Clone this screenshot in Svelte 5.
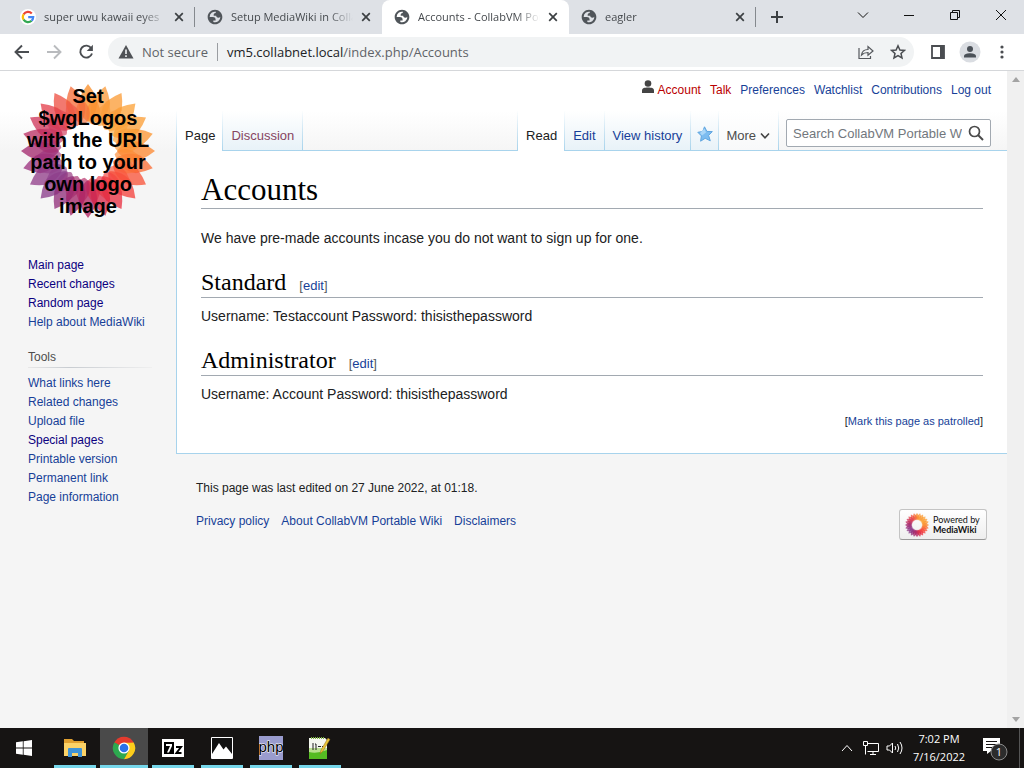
<script>
  const tabs = [
    { title: 'super uwu kawaii eyes', google: true },
    { title: 'Setup MediaWiki in CollabVM' },
    { title: 'Accounts - CollabVM Portable', active: true },
    { title: 'eagler' }
  ];
  const personal = [
    { label: 'Talk', missing: true },
    { label: 'Preferences' },
    { label: 'Watchlist' },
    { label: 'Contributions' },
    { label: 'Log out' }
  ];
  const mainLinks = [
    { label: 'Main page', visited: true },
    { label: 'Recent changes', visited: true },
    { label: 'Random page', visited: true },
    { label: 'Help about MediaWiki' }
  ];
  const toolLinks = [
    { label: 'What links here' },
    { label: 'Related changes' },
    { label: 'Upload file' },
    { label: 'Special pages', visited: true },
    { label: 'Printable version' },
    { label: 'Permanent link' },
    { label: 'Page information' }
  ];
  const sections = [
    { title: 'Standard', text: 'Username: Testaccount Password: thisisthepassword' },
    { title: 'Administrator', text: 'Username: Account Password: thisisthepassword' }
  ];
  // Petal colours, clockwise from the top
  const petals = [
    '#fa8f2c', '#fb9c3c', '#fb9d3a', '#fca43c', '#fb9f38', '#fb9735',
    '#fc8a34', '#fb7038', '#f9563c', '#f4443f', '#e93242', '#d92a4a',
    '#b42562', '#a4286a', '#94327c', '#8c3f8c', '#93418c', '#9c3480',
    '#a52c70', '#bd3366', '#d0395c', '#e4434e', '#ee5346', '#f56e3c'
  ];
  const step = 360 / petals.length;
  const logoLines = ['Set', '$wgLogos', 'with the URL', 'path to your', 'own logo', 'image'];
</script>

{#snippet flower()}
  {#each petals as color, i}
    <path d="M0-29C-6-33-10-42-9-52Q-5-61 0-67Q5-61 9-52C10-42 6-33 0-29Z" fill={color} opacity=".78" transform="rotate({i * step})" />
  {/each}
  {#each petals as color, i}
    <path d="M0-27C-6-29-8-38-6-44Q-3-50 0-55Q3-50 6-44C8-38 6-29 0-27Z" fill={color} opacity=".65" transform="rotate({i * step + step / 2})" />
  {/each}
{/snippet}

{#snippet globe()}
  <svg class="favicon" viewBox="0 0 24 24" aria-hidden="true">
    <path fill="#50555a" fill-rule="evenodd" d="M12 1C5.900 1 1 5.900 1 12s4.900 11 11 11 11-4.900 11-11S18.100 1 12 1zM4 12h4.400c3.407.022 4.922 1.730 4.543 5.127H9.488v2.470a8.004 8.004 0 0 0 10.498-8.083C19.327 12.504 18.332 13 17 13c-2.137 0-3.206-.916-3.206-2.750h-3.748c-.274-2.728.683-4.092 2.870-4.092 0-.975.327-1.597.811-1.970A8 8 0 0 0 4 12z" />
  </svg>
{/snippet}

{#snippet cross()}
  <svg width="10" height="10" viewBox="0 0 10 10" aria-hidden="true"><path d="M1.200 1.200 8.800 8.800M8.800 1.200 1.200 8.800" stroke="#3c4043" stroke-width="1.700" /></svg>
{/snippet}

{#snippet sideList(items)}
  <ul>
    {#each items as item}
      <li><a href="#wiki" class:visited={item.visited}>{item.label}</a></li>
    {/each}
  </ul>
{/snippet}

<div class="screen">
  <div class="tabstrip">
    {#each tabs as tab}
      <div class="tab" class:active={tab.active}>
        {#if tab.google}
          <svg class="favicon" viewBox="0 0 16 16" aria-hidden="true">
            <circle cx="8" cy="8" r="8" fill="#fff" />
            <g fill="none" stroke-width="2.200">
              <path d="M11.800 4.500A5.200 5.200 0 0 0 3.600 5.300" stroke="#ea4335" />
              <path d="M3.600 5.300a5.200 5.200 0 0 0 0 5.400" stroke="#fbbc05" />
              <path d="M3.600 10.700a5.200 5.200 0 0 0 8 1" stroke="#34a853" />
              <path d="M11.600 11.700A5.200 5.200 0 0 0 13.200 8.200H8.200" stroke="#4285f4" />
            </g>
          </svg>
        {:else}
          {@render globe()}
        {/if}
        <span class="title">{tab.title}</span>
        <button aria-label="Close tab">{@render cross()}</button>
      </div>
    {/each}
    <button class="newtab" aria-label="New tab">
      <svg width="12" height="12" viewBox="0 0 12 12"><path d="M6 0V12M0 6H12" stroke="#3c4043" stroke-width="2" /></svg>
    </button>
    <div class="controls">
      <button aria-label="Search tabs"><svg width="12" height="12" viewBox="0 0 12 12"><path d="M1 3.500 6 8.500 11 3.500" /></svg></button>
      <button aria-label="Minimize"><svg width="12" height="12" viewBox="0 0 12 12"><path d="M1 6.500H11" /></svg></button>
      <button aria-label="Restore"><svg width="12" height="12" viewBox="0 0 12 12"><path d="M1.500 3.500H8.500V10.500H1.500ZM3.500 3V1.500H10.500V8.500H9" /></svg></button>
      <button aria-label="Close"><svg width="12" height="12" viewBox="0 0 12 12"><path d="M1 1 11 11M11 1 1 11" /></svg></button>
    </div>
  </div>

  <div class="toolbar">
    <button aria-label="Back"><svg width="16" height="16" viewBox="0 0 16 16"><path d="M15 8H2M8 1.500 1.500 8 8 14.500" fill="none" stroke="#4a4d51" stroke-width="1.900" /></svg></button>
    <button aria-label="Forward"><svg width="16" height="16" viewBox="0 0 16 16"><path d="M1 8H14M8 1.500 14.500 8 8 14.500" fill="none" stroke="#b9bbbe" stroke-width="1.900" /></svg></button>
    <button aria-label="Reload"><svg width="16" height="16" viewBox="0 0 16 16"><path d="M13.300 4.300A6 6 0 1 0 14 9.500" fill="none" stroke="#4a4d51" stroke-width="1.900" /><path d="M14.900 .8V7H8.700Z" fill="#4a4d51" /></svg></button>
    <div class="omnibox">
      <svg width="16" height="16" viewBox="0 0 16 16" aria-hidden="true"><path d="M8 1 15.500 14.500H.5Z" fill="#4f5256" /><path d="M8 5.500V10M8 11.200V13" stroke="#f1f3f4" stroke-width="1.600" /></svg>
      <span class="secure">Not secure</span>
      <span class="url">vm5.collabnet.local<span>/index.php/Accounts</span></span>
      <button aria-label="Share"><svg width="16" height="16" viewBox="0 0 16 16"><path d="M1 4V14.500H12.500V12M3.500 11C4 7 6.500 5.500 10 5.500V2.500L15 7 10 11.300V8.500C7 8.500 5.200 9.200 3.500 11Z" fill="none" stroke="#55585c" stroke-width="1.200" /></svg></button>
      <button aria-label="Bookmark"><svg width="16" height="16" viewBox="0 0 16 16"><path d="M8 1.800 9.900 6 14.400 6.400 11 9.500 12 13.900 8 11.600 4 13.900 5 9.500 1.600 6.400 6.100 6Z" fill="none" stroke="#4a4d51" stroke-width="1.500" /></svg></button>
    </div>
    <button aria-label="Side panel"><svg width="14" height="14" viewBox="0 0 14 14"><path d="M1 1H13V13H1Z" fill="none" stroke="#4a4d51" stroke-width="1.800" /><path d="M9 1H13V13H9Z" fill="#4a4d51" /></svg></button>
    <button aria-label="Profile"><svg width="22" height="22" viewBox="0 0 22 22"><circle cx="11" cy="11" r="10.500" fill="#dadde2" /><circle cx="11" cy="8" r="3" fill="#4b5158" /><path d="M5 16.500V15.200C5 13 8.500 12.200 11 12.200S17 13 17 15.200V16.500Z" fill="#4b5158" /></svg></button>
    <button aria-label="Menu"><svg width="4" height="14" viewBox="0 0 4 14" fill="#4a4d51"><circle cx="2" cy="2" r="1.600" /><circle cx="2" cy="7" r="1.600" /><circle cx="2" cy="12" r="1.600" /></svg></button>
  </div>

  <div class="viewport">
    <div class="wiki">
      <aside>
        <a class="logo" href="#wiki" aria-label="Visit the main page">
          <svg width="160" height="160" viewBox="-80 -80 160 160">
            <circle r="29" fill="#fff" />
            {@render flower()}
            {#each logoLines as line, i}
              <text x="0" y={i * 22 - 48} text-anchor="middle">{line}</text>
            {/each}
          </svg>
        </a>
        <nav aria-label="Navigation">{@render sideList(mainLinks)}</nav>
        <nav class="tools" aria-label="Tools">
          <h3>Tools</h3>
          {@render sideList(toolLinks)}
        </nav>
      </aside>

      <div class="main">
        <header>
          <div class="personal">
            <a href="#wiki" class="missing user">
              <svg width="12" height="14" viewBox="0 0 12 14" aria-hidden="true"><circle cx="6" cy="3.500" r="3.300" fill="#444" /><path d="M0 13V10.500C0 8 2.500 7.400 6 7.400S12 8 12 10.500V13Z" fill="#444" /></svg>
              Account
            </a>
            {#each personal as item}
              <a href="#wiki" class:missing={item.missing}>{item.label}</a>
            {/each}
          </div>
          <div class="views">
            <a class="view current" href="#wiki">Page</a>
            <a class="view talk" href="#wiki">Discussion</a>
            <span class="fill"></span>
            <a class="view current" href="#wiki">Read</a>
            <a class="view" href="#wiki">Edit</a>
            <a class="view" href="#wiki">View history</a>
            <a class="view watch" href="#wiki" aria-label="Watch">
              <svg width="16" height="16" viewBox="0 0 16 16"><path d="M7.500 .8 9.900 5.400 15.300 5.600 11.600 9.400 13.300 14.800 8.200 12.300 3.600 15.200 4.400 9.900 .8 6.300 5.700 5.500Z" fill="#7cbcf0" stroke="#5fa5df" /><path d="M7.500 2.500 9 6.500 5 9.500 3 7Z" fill="#a9d6f8" /></svg>
            </a>
            <button class="view more">More <svg width="10" height="8" viewBox="0 0 10 8" aria-hidden="true"><path d="M1 1.500 5 5.800 9 1.500" fill="none" stroke="#444" stroke-width="1.600" /></svg></button>
            <form class="search">
              <div>
                <input type="text" aria-label="Search" placeholder="Search CollabVM Portable Wiki" />
                <button type="button" aria-label="Go"><svg width="16" height="16" viewBox="0 0 16 16"><circle cx="6.500" cy="6.500" r="5" fill="none" stroke="#4a4a4a" stroke-width="1.700" /><path d="M10 10 15 15" stroke="#4a4a4a" stroke-width="2" /></svg></button>
              </div>
            </form>
          </div>
        </header>

        <main>
          <h1>Accounts</h1>
          <p>We have pre-made accounts incase you do not want to sign up for one.</p>
          {#each sections as s}
            <h2>{s.title} <span>[<a href="#wiki">edit</a>]</span></h2>
            <p>{s.text}</p>
          {/each}
          <div class="patrol">[<a href="#wiki">Mark this page as patrolled</a>]</div>
        </main>

        <footer>
          <div class="info">
            <p>This page was last edited on 27 June 2022, at 01:18.</p>
            <div class="places">
              <a href="#wiki">Privacy policy</a>
              <a href="#wiki">About CollabVM Portable Wiki</a>
              <a href="#wiki">Disclaimers</a>
            </div>
          </div>
          <a class="powered" href="#wiki">
            <svg width="26" height="26" viewBox="-72 -72 144 144" aria-hidden="true">{@render flower()}</svg>
            <span>Powered by<b>MediaWiki</b></span>
          </a>
        </footer>
      </div>
    </div>
    <div class="scrollbar" aria-hidden="true">
      <svg width="8" height="5" viewBox="0 0 8 5"><path d="M0 5 4 0 8 5Z" fill="#a3a3a3" /></svg>
      <svg width="8" height="5" viewBox="0 0 8 5"><path d="M0 0 4 5 8 0Z" fill="#a3a3a3" /></svg>
    </div>
  </div>

  <div class="taskbar">
    <button class="start" aria-label="Start"><svg width="16" height="16" viewBox="0 0 16 16" fill="#fff"><path d="M0 2.300 6.800 1.300V7.600H0ZM7.600 1.200 16 0V7.600H7.600ZM0 8.400H6.800V14.700L0 13.700ZM7.600 8.400H16V16L7.600 14.800Z" /></svg></button>
    <button class="app" aria-label="File Explorer"><svg width="22" height="20" viewBox="0 0 22 20"><path d="M0 1H8L10 3H20V6H0Z" fill="#e0a030" /><path d="M0 5H22V18H0Z" fill="#fbd267" /><path d="M4 19V11Q4 10 5 10H17Q18 10 18 11V19H14V15H8V19Z" fill="#3f93d6" /></svg></button>
    <button class="app focused" aria-label="Google Chrome"><svg width="24" height="24" viewBox="-12 -12 24 24"><path d="M0 0-9.700-5.600A11.200 11.200 0 0 1 9.700-5.600Z" fill="#e33b2e" /><path d="M-9.700-5.600A11.200 11.200 0 0 0 0 11.200L4.800 2.800 0 0Z" fill="#2da94f" /><path d="M9.700-5.600A11.200 11.200 0 0 1 0 11.200L4.800 2.800 0-5.600Z" fill="#fdcd1b" /><path d="M-9.700-5.600-4.800 2.800 0 0Z" fill="#2da94f" /><path d="M0-5.600H9.700L0-7Z" fill="#e33b2e" /><circle r="5.600" fill="#fff" /><circle r="4.300" fill="#2b72e8" /></svg></button>
    <button class="app" aria-label="7-Zip"><svg width="22" height="18" viewBox="0 0 22 18"><path d="M0 0H22V18H0Z" fill="#fff" /><path d="M2 3H12V15H2Z" fill="#000" /><path d="M4 5H10V7L7 13.500H5L8 7H4Z" fill="#fff" /><path d="M14 8H19L14.500 14H19.500" fill="none" stroke="#000" stroke-width="2" /></svg></button>
    <button class="app" aria-label="Photos"><svg width="22" height="22" viewBox="0 0 22 22"><path d="M.5 .5H21.500V21.500H.5Z" fill="#111" stroke="#fff" /><path d="M1 17 8 6 12.500 12.500 15 9.500 21 17V21.500H1Z" fill="#fff" /></svg></button>
    <button class="app" aria-label="PHP"><svg width="24" height="24" viewBox="0 0 24 24"><path d="M0 0H24V24H0Z" fill="#9a9cce" /><text class="php" x="12" y="16" text-anchor="middle">php</text></svg></button>
    <button class="app" aria-label="Notepad++"><svg width="24" height="24" viewBox="2 0 24 24"><path d="M3 2H19L21 4V23H3Z" fill="#f4f7ef" /><path d="M3 15Q11 17 21 13V23H3Z" fill="#55bb22" /><path d="M3 12H21V14Q11 18 3 16Z" fill="#b9e08f" /><path d="M5 2H19" stroke="#7cb342" stroke-width="2" stroke-dasharray="1 1" /><path d="M7 7V14M9 8H10V14M12 10.500H15M16 10.500H17" stroke="#222" fill="none" /><path d="M22 2 15 14 14 18 17 15 24 3.500Z" fill="#e9c437" stroke="#8a6d1c" stroke-width=".5" /></svg></button>

    <div class="tray">
      <button aria-label="Show hidden icons"><svg width="12" height="8" viewBox="0 0 12 8"><path d="M1 7 6 1.500 11 7" /></svg></button>
      <button aria-label="Network"><svg width="16" height="14" viewBox="0 0 16 14"><path d="M5 2.500H15.500V10.500H4.500M10 10.500V13M7 13.500H13M.5 .5H4.500V4.500H.5ZM2.500 4.500V13.500" /></svg></button>
      <button aria-label="Volume"><svg width="18" height="14" viewBox="0 0 18 14"><path d="M1 5H3.500L6.500 2V12L3.500 9H1ZM9 5Q10.500 7 9 9M11.500 3Q14 7 11.500 11M14 1Q18 7 14 13" /></svg></button>
      <button class="clock"><span>7:02 PM</span><span>7/16/2022</span></button>
      <button class="notify" aria-label="Notifications"><svg width="26" height="26" viewBox="0 0 26 26"><path class="solid" d="M1 3H18V16H9L5 19V16H1Z" /><path class="lines" d="M4 6.500H15M4 9.500H15M4 12.500H10" /><circle cx="17" cy="17" r="8" fill="#2c2c2c" stroke="#8a8a8a" /><text x="17" y="21" text-anchor="middle">1</text></svg></button>
      <span class="desktop"></span>
    </div>
  </div>
</div>

<style>
  :global(body) { margin: 0; }
  * { box-sizing: border-box; }
  button { border: 0; padding: 0; margin: 0; background: none; color: inherit; font: inherit; display: flex; align-items: center; justify-content: center; }
  a { color: #173f98; text-decoration: none; }
  svg { display: block; flex: none; }
  h1, h2, h3, p, ul { margin: 0; padding: 0; font-weight: normal; }
  ul { list-style: none; }

  .screen { display: flex; flex-direction: column; height: 100vh; overflow: hidden; font-family: "Liberation Sans", Arial, sans-serif; }

  .tabstrip, .toolbar, .taskbar { flex: none; font-family: "Open Sans", "Noto Sans", sans-serif; }
  .tabstrip { display: flex; height: 34px; padding-left: 8px; background: #dee1e6; }
  .tab { flex: 0 1 187px; min-width: 0; display: flex; align-items: center; gap: 8px; padding: 0 10px 0 12px; font-size: 11px; color: #45494d;
    border: 0 solid; border-image: linear-gradient(transparent 8px, #85898e 8px, #85898e 26px, transparent 26px) 1; border-width: 0 1px 0 0; }
  .tab.active, .tab:has(+ .active) { border-image: none; border-color: transparent; }
  .tab.active { background: #fff; border-radius: 8px 8px 0 0; }
  .favicon { width: 16px; height: 16px; }
  .title { flex: 1; min-width: 0; overflow: hidden; white-space: nowrap; line-height: 18px; mask-image: linear-gradient(to right, #000 calc(100% - 24px), transparent); }
  .newtab { width: 42px; }
  .controls { display: flex; margin-left: auto; padding-bottom: 5px; }
  .controls button { width: 46px; }
  .controls path { fill: none; stroke: #111; stroke-width: 1; }

  .toolbar { display: flex; align-items: center; height: 37px; padding: 0 6px; background: #fff; border-bottom: 1px solid #d5d7da; }
  .toolbar button { width: 32px; height: 28px; }
  .omnibox { flex: 1; min-width: 0; display: flex; align-items: center; height: 30px; margin: 0 8px 0 6px; padding-left: 10px; border-radius: 15px; background: #f1f3f4; font-size: 13px; line-height: 18px; color: #5f6368; }
  .secure { margin: 0 9px 0 8px; padding-right: 9px; border-right: 1px solid #9a9da1; }
  .url { flex: 1; color: #202124; }
  .url span { color: #5f6368; }

  .viewport { flex: 1; min-height: 0; display: flex; background: #f5f5f5; }
  .wiki { flex: 1; min-width: 0; display: grid; grid-template-columns: 176px 1fr; align-items: start; background: linear-gradient(#fff 40px, #f5f5f5 80px); }
  .scrollbar { width: 17px; display: flex; flex-direction: column; align-items: center; justify-content: space-between; padding: 6px 0; background: #f0f0f0; }

  .logo { display: flex; justify-content: center; height: 160px; margin-bottom: 25px; }
  .logo text { font-size: 20px; font-weight: bold; fill: #000; }
  aside nav { padding: 0 24px 0 28px; font-size: 12px; line-height: 19px; }
  .visited { color: #0b0080; }
  .tools { margin-top: 16px; }
  .tools h3 { margin-bottom: 6px; font-size: 12px; color: #4d4d4d; border-bottom: 1px solid; border-image: linear-gradient(to right, #e8e8e8, #c8ccd1 33%, #f0f0f0) 1; }

  header { display: flex; flex-direction: column; justify-content: space-between; height: 80px; padding-top: 9px; }
  .personal { display: flex; justify-content: flex-end; gap: 9px; padding-right: 16px; font-size: 12px; line-height: 20px; }
  .personal { column-gap: 9px; }
  .user { display: flex; gap: 4px; }
  .personal .missing { color: #ba0000; }
  .views { display: flex; height: 40px; font-size: 13px; }
  .view, .fill, .search { border: 0 solid; border-width: 0 1px 1px 0; border-color: #a7d7f9;
    border-image: linear-gradient(rgba(167, 215, 249, 0), #a7d3ec) 1; }
  .view { display: flex; align-items: center; padding: 10px 8px 0; white-space: nowrap; background: linear-gradient(#fff, #e8f2f8); }
  .current { padding: 10px 7px 1px 8px; color: #202122; background: #fff; border-width: 0 1px 0 0; }
  .current:first-child { border-width: 0 1px; }
  .talk { color: #87455f; }
  .watch { padding: 6px 5px 0 6px; }
  .more { color: #4d4d4d; gap: 4px; background: linear-gradient(#fff, #f8f9fa); padding: 10px 8px 0 7px; }
  .fill { flex: 1; }
  .search { border-right: 0; padding: 8px 16px 0 7px; border-width: 0 0 1px; }
  .search div { display: flex; width: 205px; height: 28px; border: 1px solid #a2a9b1; border-radius: 2px; background: #fff; }
  .search input { flex: 1; min-width: 0; border: 0; padding: 0 0 0 6px; background: none; outline: 0; font: 13px "Liberation Sans", Arial, sans-serif; }
  .search input::placeholder { color: #72777d; }
  .search button { width: 28px; }

  main { padding: 20px 24px 22px; background: #fff; border: 1px solid #a7d3ec; border-width: 0 0 1px 1px; font-size: 14px; line-height: 22px; color: #202122; }
  h1, h2 { font-family: "Liberation Serif", "Times New Roman", serif; color: #000; border-bottom: 1px solid #a2a9b1; }
  h1 { margin-bottom: 18px; font-size: 31px; line-height: 37px; }
  h2 { margin: 18px 0 7px; font-size: 24px; line-height: 30px; }
  h2 span { margin-left: 7px; font: 13px "Liberation Sans", Arial, sans-serif; color: #54595d; }
  .patrol { margin-top: 6px; font-size: 11px; line-height: 20px; text-align: right; }

  footer { display: flex; justify-content: space-between; align-items: flex-end; padding: 24px 20px 0; font-size: 12px; line-height: 20px; color: #202122; }
  .info { padding-bottom: 9px; }
  .places { display: flex; gap: 12px; margin-top: 13px; }
  .powered { display: flex; align-items: center; gap: 3px; width: 88px; height: 31px; padding-left: 4px; border: 1px solid #c4c4c4; border-bottom-color: #999; border-radius: 3px; background: linear-gradient(#fff, #eee); color: #111; font: 9px/10px Lato, sans-serif; }
  .powered b { display: block; }

  .taskbar { display: flex; height: 40px; background: #161413; color: #fff; }
  .start { width: 48px; margin-right: 3px; }
  .app { width: 48px; margin-right: 1px; padding-top: 3px; border: 0 solid #76d7ea; border-image: linear-gradient(to right, transparent 4px, #76d7ea 4px, #76d7ea 44px, transparent 44px) 1; border-width: 0 0 3px; }
  .focused { background: #4a4a4a; border-image: none; }
  .php { font: 15px "Liberation Sans", sans-serif; fill: #000; stroke: #fff; stroke-width: 1px; paint-order: stroke; }
  .tray { display: flex; margin-left: auto; }
  .tray button { width: 24px; }
  .tray path { fill: none; stroke: #fff; }
  .tray path.solid { fill: #fff; stroke: none; }
  .tray path.lines { stroke: #161413; }
  .tray .clock { width: 64px; flex-direction: column; font-size: 11px; line-height: 18px; }
  .tray .notify { width: 48px; }
  .notify text { font-size: 11px; fill: #fff; }
  .desktop { width: 5px; border-left: 1px solid #555; }
</style>
